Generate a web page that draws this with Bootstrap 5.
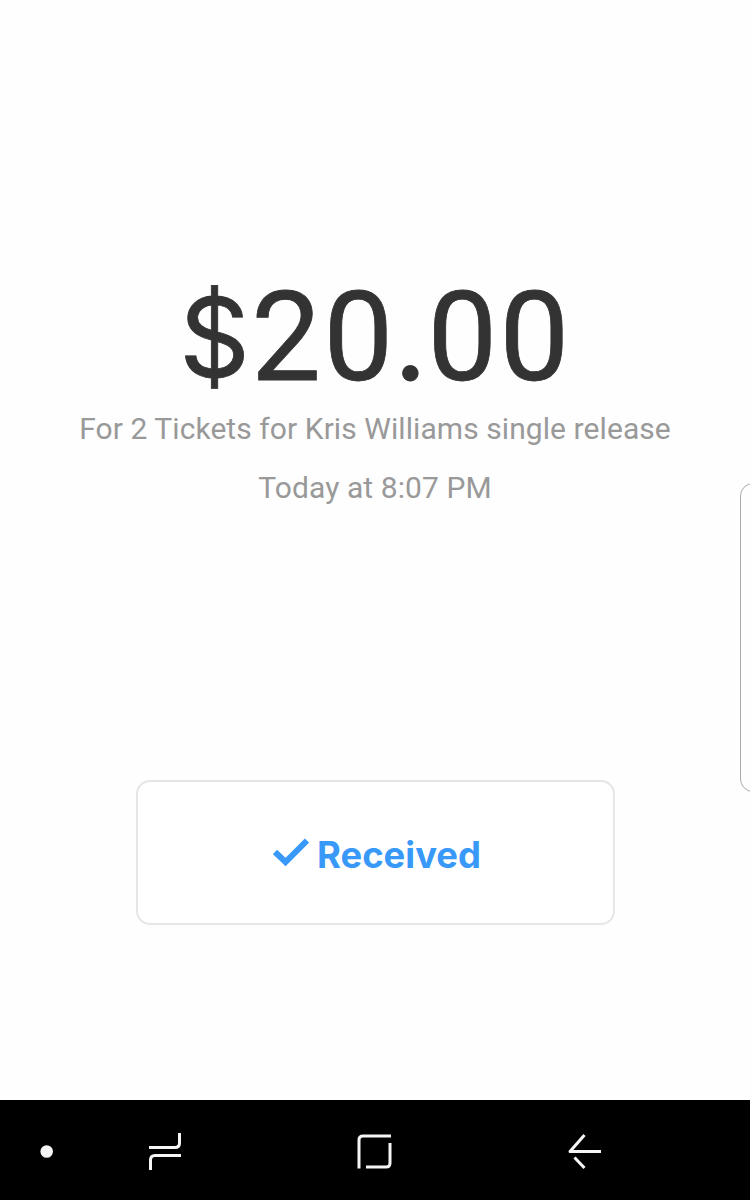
<!DOCTYPE html>
<html lang="en">
<head>
<meta charset="utf-8">
<meta name="viewport" content="width=device-width, initial-scale=1">
<title>Payment</title>
<link rel="stylesheet" href="https://cdn.jsdelivr.net/npm/bootstrap@5.3.0/dist/css/bootstrap.min.css">
<style>
  body { background: #fefefe; font-family: Roboto, sans-serif; }
  .screen { height: 1200px; }
  .payment { padding-top: 268px; }
  .amount { height: 131px; margin: 0; padding-left: 1px; font: 400 124px/140px Roboto, sans-serif; color: #333; letter-spacing: 2.5px; -webkit-text-stroke: .8px #333; }
  .currency { font-family: Inter, sans-serif; font-size: 110px; line-height: 100px; letter-spacing: 1.5px; vertical-align: 3px; }
  .point { font-family: Lato, sans-serif; line-height: 100px; }
  .detail { font-size: 30px; line-height: 59px; letter-spacing: .07px; color: #999; white-space: nowrap; }
  .status { width: 479px; height: 145px; margin-top: 263px; padding-left: 4px; border: 2px solid #e6e6e6; border-radius: 14px; color: #3899f8; background: #fff; font: 700 36.4px/50px Inter, sans-serif; }
  .status span { padding-top: 4px; }
  .edge-handle { top: 483px; right: -30px; width: 40px; height: 309px; border: 1px solid #aaa; border-radius: 13px; }
  .softkeys { height: 100px; background: #000; color: #f5f5f5; }
  .softkeys svg { display: block; fill: none; stroke: currentColor; stroke-width: 3; }
</style>
</head>
<body>
<main class="screen position-relative overflow-hidden d-flex flex-column">
  <section class="payment flex-grow-1 d-flex flex-column align-items-center text-center">
    <h1 class="amount"><span class="currency">$</span>20<span class="point">.</span>00</h1>
    <div class="detail">For 2 Tickets for Kris Williams single release</div>
    <div class="detail">Today at 8:07 PM</div>
    <div class="status d-flex align-items-center justify-content-center gap-2">
      <svg width="36" height="29" viewBox="0 0 36 29" aria-hidden="true"><path d="M2 14 12.500 24 34 2.500" fill="none" stroke="currentColor" stroke-width="6"/></svg>
      <span>Received</span>
    </div>
  </section>
  <div class="edge-handle position-absolute"></div>
  <nav class="softkeys" aria-label="System">
    <svg width="750" height="100" viewBox="0 1100 750 100">
      <circle cx="46.700" cy="1151.500" r="6.300" fill="currentColor" stroke="none"/>
      <path d="M149 1147.500h26q4.500 0 4.500-4.500v-10M181 1155.500h-26q-4.500 0-4.500 4.500v10"/>
      <path d="M391 1136h-28q-4 0-4 4v28.500M366 1167h20q4 0 4-4v-20"/>
      <path d="M601 1151.500h-31L584.500 1135M574.500 1157.500l10 10.500" stroke-linejoin="round"/>
    </svg>
  </nav>
</main>
<script src="https://cdn.jsdelivr.net/npm/bootstrap@5.3.0/dist/js/bootstrap.bundle.min.js"></script>
</body>
</html>
